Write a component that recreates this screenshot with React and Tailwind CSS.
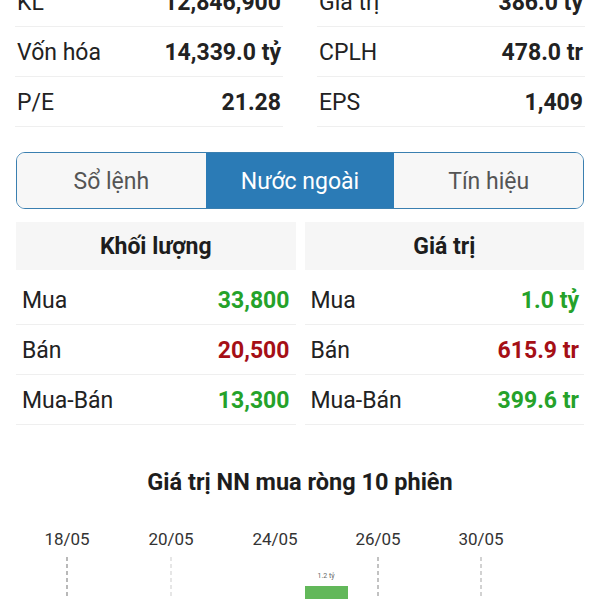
import React from "react";

const top = [
  ["KL", "12,846,900", "Giá trị", "386.0 tỷ"],
  ["Vốn hóa", "14,339.0 tỷ", "CPLH", "478.0 tr"],
  ["P/E", "21.28", "EPS", "1,409"],
];

const GREEN = "text-[#25a22a]";
const RED = "text-[#a50f16]";

const vol = [
  ["Mua", "33,800", GREEN],
  ["Bán", "20,500", RED],
  ["Mua-Bán", "13,300", GREEN],
];
const val = [
  ["Mua", "1.0 tỷ", GREEN],
  ["Bán", "615.9 tr", RED],
  ["Mua-Bán", "399.6 tr", GREEN],
];

function Cell({ label, value }) {
  return (
    <div className="h-[50px] pt-[3px] flex items-center justify-between border-b border-[#efefef] px-[2px]">
      <span className="text-[23px] text-[#222]">{label}</span>
      <span className="text-[23px] font-bold text-[#222]">{value}</span>
    </div>
  );
}

function Column({ title, rows, lpad, rpad }) {
  return (
    <div className="flex flex-col">
      <div className="h-[48px] pt-[3px] bg-[#f6f6f6] flex items-center justify-center text-[23px] font-bold text-[#1d1d1d]">
        {title}
      </div>
      <div className="h-[5px]" />
      {rows.map(([l, v, c]) => (
        <div
          key={l}
          className={`h-[50px] pt-[3px] flex items-center justify-between border-b border-[#efefef] ${lpad} ${rpad}`}
        >
          <span className="text-[23px] text-[#222]">{l}</span>
          <span className={`text-[23px] font-bold ${c}`}>{v}</span>
        </div>
      ))}
    </div>
  );
}

export default function App() {
  const dates = [
    ["18/05", 67, "#8a8a8a"],
    ["20/05", 171, "#d6d6d6"],
    ["24/05", 275, null],
    ["26/05", 378, "#9a9a9a"],
    ["30/05", 481, "#b5b5b5"],
  ];
  return (
    <div className="w-[600px] h-[600px] overflow-hidden bg-white font-['Roboto',sans-serif]">
      <div className="-mt-[23px] px-[15px] grid grid-cols-2 gap-x-[34px]">
        {top.map(([a, b, c, d]) => (
          <React.Fragment key={a}>
            <Cell label={a} value={b} />
            <Cell label={c} value={d} />
          </React.Fragment>
        ))}
      </div>

      <div className="mt-[25px] mx-[16px] h-[57px] pt-[3px] border-[1.5px] border-[#3a7fb0] rounded-[9px] overflow-hidden grid grid-cols-3 bg-[#f7f7f7]">
        <div className="-mt-[3px] pt-[3px] bg-[#f7f7f7] flex items-center justify-center text-[23px] text-[#555]">Sổ lệnh</div>
        <div className="-mt-[3px] pt-[3px] bg-[#2b7bb6] flex items-center justify-center text-[23px] text-white">Nước ngoài</div>
        <div className="-mt-[3px] pt-[3px] bg-[#f7f7f7] flex items-center justify-center text-[23px] text-[#555]">Tín hiệu</div>
      </div>

      <div className="mt-[13px] mx-[16px] grid grid-cols-2 gap-[9px]">
        <Column title="Khối lượng" rows={vol} lpad="pl-[6px]" rpad="pr-[6px]" />
        <Column title="Giá trị" rows={val} lpad="pl-[6px]" rpad="pr-[5px]" />
      </div>

      <div className="mt-[44px] text-center text-[23.5px] font-bold text-[#1d1d1d] leading-[26px]">
        Giá trị NN mua ròng 10 phiên
      </div>

      <svg width="600" height="80" className="mt-[24px] block">
        {dates.map(([t, x, col]) => (
          <g key={t}>
            <text
              x={x}
              y={26}
              textAnchor="middle"
              fontFamily="Roboto, sans-serif"
              fontSize="17"
              fill="#333"
            >
              {t}
            </text>
            {col && (
              <line
                x1={x}
                y1={38}
                x2={x}
                y2={80}
                stroke={col}
                strokeWidth="1.2"
                strokeDasharray="4 3"
              />
            )}
          </g>
        ))}
        <text
          x={326}
          y={59}
          textAnchor="middle"
          fontFamily="Roboto, sans-serif"
          fontSize="7"
          fill="#666"
        >
          1.2 tỷ
        </text>
        <rect x={305} y={67} width={43} height={20} fill="#62b85a" />
      </svg>
    </div>
  );
}
